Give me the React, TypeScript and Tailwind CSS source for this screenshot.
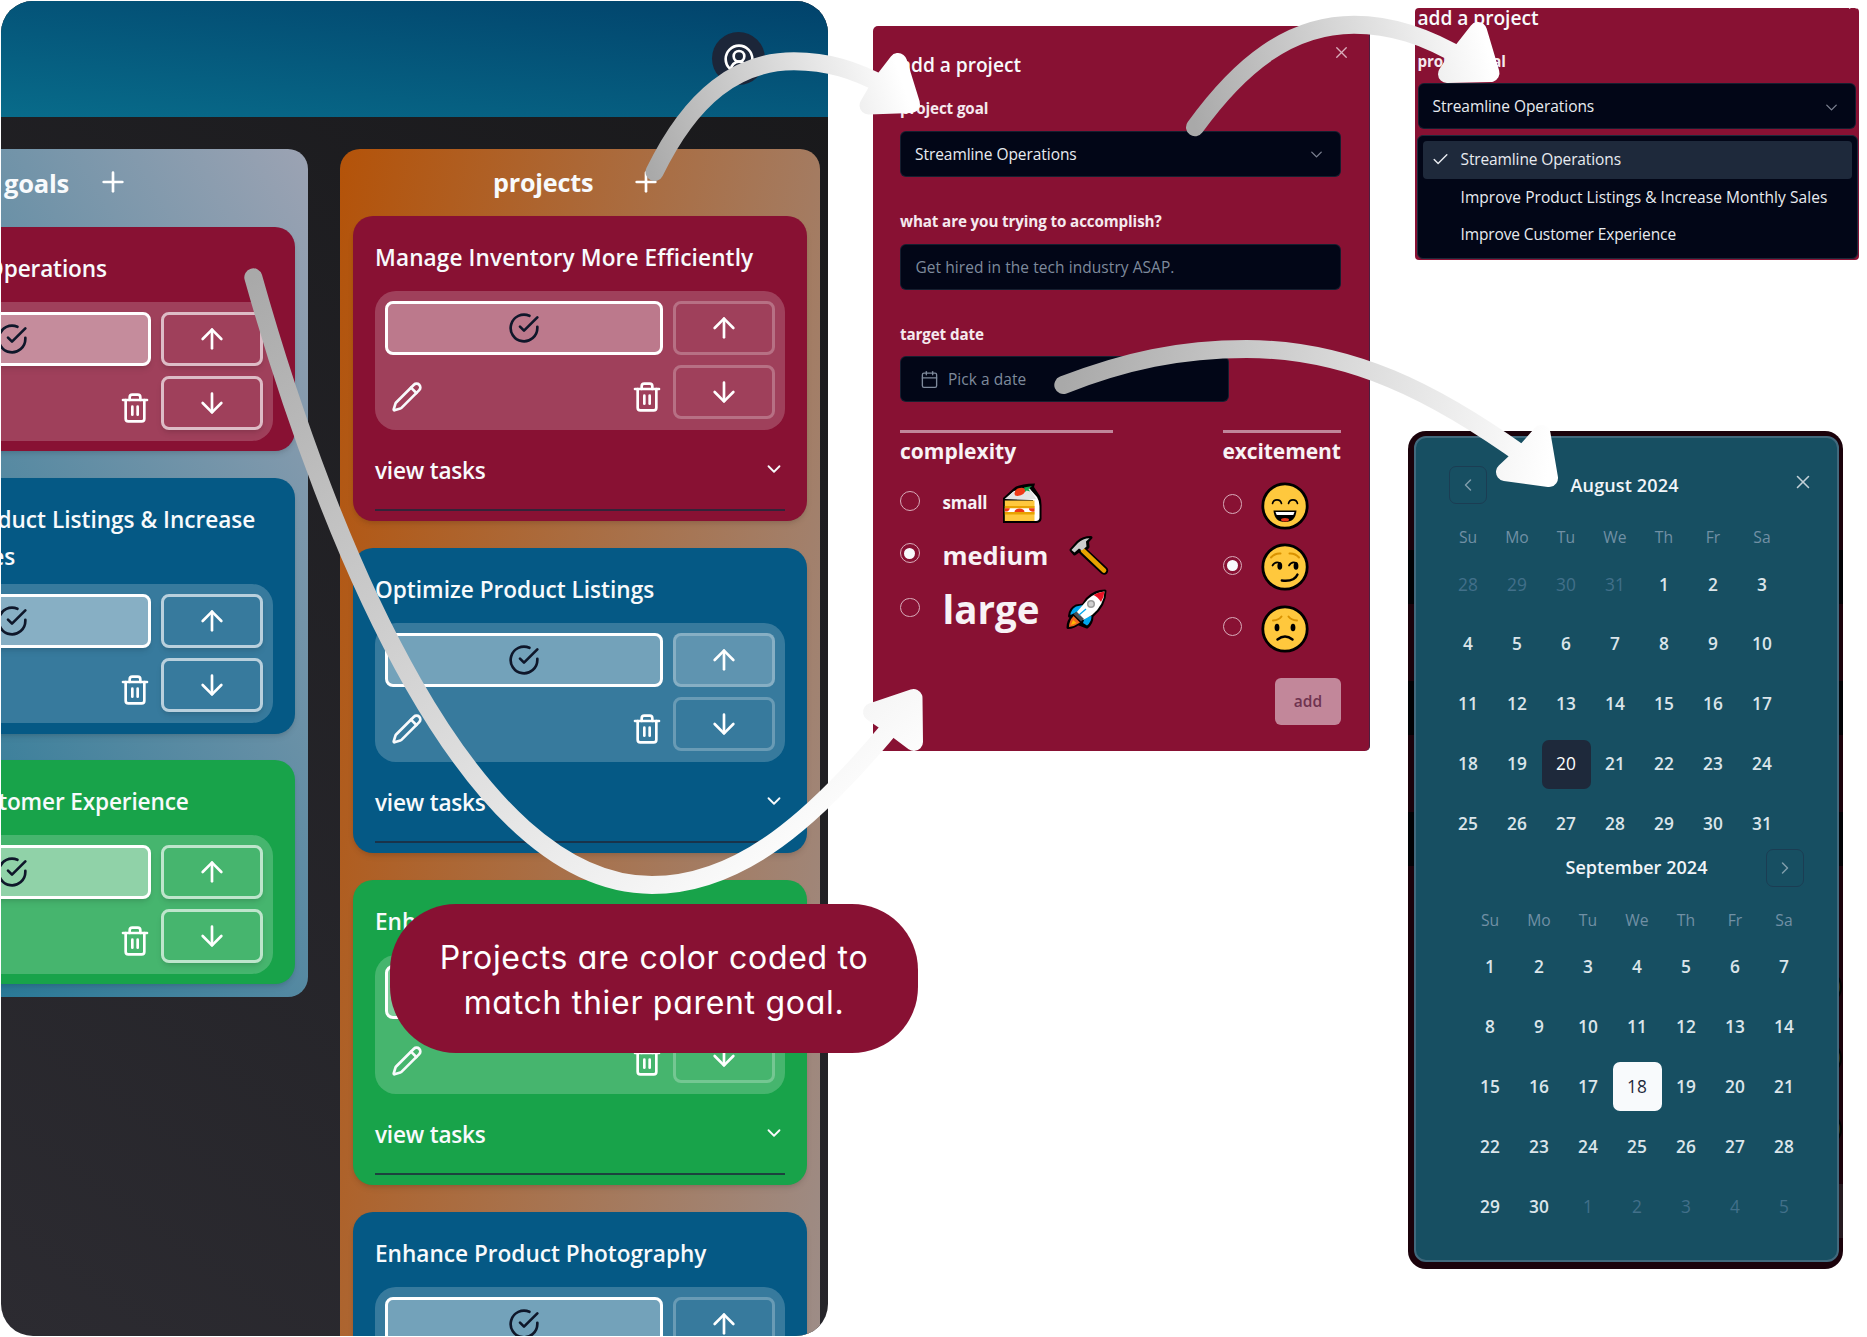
import React from "react";
import {
  ArrowDown,
  ArrowUp,
  Calendar,
  Check,
  ChevronDown,
  ChevronLeft,
  ChevronRight,
  CircleUserRound,
  Pencil,
  Plus,
  Trash2,
  X,
} from "lucide-react";

type Tone = "rose" | "sky" | "green";

const TONES: Record<Tone, string> = {
  rose: "bg-[#881133]",
  sky: "bg-[#055985]",
  green: "bg-[#18a34a]",
};

function DoneIcon() {
  return (
    <svg width="32" height="32" viewBox="0 0 24 24" fill="none" stroke="#0f172a" strokeWidth="2" strokeLinecap="round" strokeLinejoin="round">
      <path d="M22 11.08V12a10 10 0 1 1-5.93-9.14" />
      <path d="m9 11 3 3L22 4" />
    </svg>
  );
}

function Controls({ strong, lit }: { strong?: boolean; lit?: boolean }) {
  const side = strong
    ? "border-white/65 shadow-md"
    : lit
      ? "border-white/25 bg-white/20"
      : "border-white/25";
  const done = strong ? "bg-white/40 shadow-md" : "bg-white/30";
  return (
    <div className="flex h-[138.5px] w-[410px] shrink-0 gap-[10px] rounded-[21px] bg-white/20 p-[10px]">
      <div className="flex w-[278px] flex-col">
        <div className={`flex h-[54px] items-center justify-center rounded-[8px] border-[3px] border-white ${done}`}>
          <DoneIcon />
        </div>
        <div className="flex items-center justify-between pt-[26px] pl-[6px]">
          <Pencil size={32} color="#f8fafc" className={strong ? "invisible" : ""} />
          <Trash2 size={32} color="#fff" />
        </div>
      </div>
      <div className="flex w-[102px] flex-col gap-[10px]">
        <div className={`flex h-[54px] items-center justify-center rounded-[8px] border-[3px] ${side}`}>
          <ArrowUp size={32} color="#fff" />
        </div>
        <div className={`flex h-[54px] items-center justify-center rounded-[8px] border-[3px] ${strong ? side : "border-white/25"}`}>
          <ArrowDown size={32} color="#fff" />
        </div>
      </div>
    </div>
  );
}

function GoalCard({ title, tone, tall }: { title: string; tone: Tone; tall?: boolean }) {
  return (
    <div className={`w-[454px] shrink-0 rounded-[20px] px-[22px] shadow-md ${TONES[tone]} ${tall ? "h-[256px]" : "h-[224px]"}`}>
      <div className={`pt-[23px] text-[22.6px] leading-[37.3px] font-semibold text-[#f8fafc] ${tall ? "h-[106.5px]" : "h-[75px] tracking-[-0.14px]"}`}>{title}</div>
      <Controls strong />
    </div>
  );
}

function ProjectCard({ title, tone, lit, wide }: { title: string; tone: Tone; lit?: boolean; wide?: boolean }) {
  return (
    <div className={`h-[305.3px] w-[453.5px] shrink-0 rounded-[20px] px-[22px] text-[22.6px] font-semibold text-[#f8fafc] shadow-md ${TONES[tone]}`}>
      <div className={`h-[75px] pt-[23px] leading-[37.3px] whitespace-nowrap ${wide ? "tracking-[0.11px]" : ""}`}>{title}</div>
      <Controls lit={lit} />
      <div className="flex h-[81px] items-center justify-between border-b-2 border-[#1e293b]/80 pt-[3px]">
        <span className="tracking-[-0.2px]">view tasks</span>
        <ChevronDown size={22} className="-mt-1" />
      </div>
    </div>
  );
}

function Board() {
  return (
    <div className="mt-px ml-px flex h-[1335px] w-[827px] shrink-0 flex-col overflow-hidden rounded-[32px] bg-[linear-gradient(215deg,#18181a,#2c2b31)]">
      <div className="flex h-[116px] shrink-0 justify-end bg-[linear-gradient(186deg,#01426b_0px,#086b8a_200px)] pt-[31px] pr-[63px]">
        <div className="flex size-[53px] items-center justify-center rounded-full bg-[#1c2639]">
          <CircleUserRound size={32} color="#fff" />
        </div>
      </div>
      <div className="-ml-[173px] flex items-start gap-8 pt-8">
        <div className="flex h-[848px] w-[480px] shrink-0 flex-col gap-[26.7px] rounded-[20px] bg-[linear-gradient(239deg,#9ca3b3_0px,#0e6f90_870px)] px-[13px]">
          <div className="-mb-[26.7px] flex h-[78px] items-center pb-[12px] pl-[163px] text-[#f8fafc]">
            <span className="w-[67px] pt-px text-[25.5px] leading-8 font-bold tracking-[-0.2px]">goals</span>
            <Plus size={32} color="#fff" className="ml-[26px]" />
          </div>
          <GoalCard title="Streamline Operations" tone="rose" />
          <GoalCard title="Improve Product Listings & Increase Monthly Sales" tone="sky" tall />
          <GoalCard title="Improve Customer Experience" tone="green" />
        </div>
        <div className="flex h-[1400px] w-[480px] shrink-0 flex-col gap-[26.8px] rounded-[20px] bg-[linear-gradient(100deg,#b45309_0px,#94a3b8_945px)] px-[13px]">
          <div className="-mb-[26.8px] flex h-[67px] shrink-0 items-center pb-[2px] pl-[140px] text-[#f8fafc]">
            <span className="w-[100px] pt-px text-[25.2px] leading-8 font-bold tracking-[-0.2px]">projects</span>
            <Plus size={32} color="#fff" className="ml-[37px]" />
          </div>
          <ProjectCard title="Manage Inventory More Efficiently" tone="rose" wide />
          <ProjectCard title="Optimize Product Listings" tone="sky" lit />
          <ProjectCard title="Enhance Customer Support" tone="green" />
          <ProjectCard title="Enhance Product Photography" tone="sky" />
        </div>
      </div>
    </div>
  );
}

function Radio({ on }: { on?: boolean }) {
  return (
    <span className="flex size-[19.5px] shrink-0 -translate-y-0.5 items-center justify-center rounded-full border-[1.3px] border-[#d9acba]">
      {on && <span className="size-[11px] rounded-full bg-[#f8fafc]" />}
    </span>
  );
}

function Cake() {
  return (
    <svg width="40" height="41" viewBox="0 0 40 41">
      <path d="M1 15 L12 5 Q16 1 33 0.5 L32 4 L38 13 Q39.5 17 39.5 22 V36 Q39 40 34 40 H1Z" fill="#000" />
      <path d="M3 16 L12 8 L27 5 L35 14 Q37.5 18 37.5 23 V35 Q37 38 34 38 H31 V17Z" fill="#fff" />
      <path d="M3 16 L11 9 L28 6 L34 16Z" fill="#e4e4e4" />
      <path d="M2.8 17.5H32.5V38H2.8Z" fill="#ffc83d" />
      <path d="M2.8 23H32.5V25.5H2.8ZM2.8 29H32.5V31.5H2.8Z" fill="#e8a200" />
      <path d="M2.8 25.3H32.5V29H2.8Z" fill="#fff" />
      <path d="M2.8 25.3h5a4 3.4 0 0 1-5 3.2zM12.5 29a5 3.4 0 0 1 10 0zM27 25.3h5.5v3.2a4 3 0 0 1-5.5-3.2z" fill="#f03a17" />
      <path d="M12.5 10.5Q13 5.5 18 5Q22 4 23.5 7Q23 12 15.5 13Q12.5 13 12.5 10.5Z" fill="#f03a17" />
      <path d="M22 4.5L30 3L26.5 6L28 8.5L24.5 7.5L23.5 9Z" fill="#16a34a" />
    </svg>
  );
}

function Hammer() {
  return (
    <svg width="40" height="39" viewBox="0 0 40 39" strokeLinejoin="round" strokeLinecap="round">
      <path d="M14 15 L35 34.5" stroke="#000" strokeWidth="8.5" />
      <path d="M2 14 L9 6 Q14 1.5 22 1.5 L18.5 5.5 L19 11 L13 16 L10.5 14.5 L5.5 18Z" fill="#000" stroke="#000" strokeWidth="3" />
      <path d="M14 14.5 L35 34.5" stroke="#e8a200" strokeWidth="4.6" />
      <path d="M2.5 14 L9 7 Q14 2.5 20.5 2.3 L17 5.5 L17.5 10.5 L13 14.5 L10 12.5 L5.5 16.5Z" fill="#cccccc" />
    </svg>
  );
}

function Rocket() {
  return (
    <svg width="41" height="41" viewBox="0 0 41 41" strokeLinejoin="round">
      <path d="M39 2 Q29 2 21 10 L17 16 L10 17 Q4 20 3.5 27 L6 28 Q2 32 2 38.5 Q8 38 12 34.5 L21 38 Q26 34 26 27 Q39 16 39 2Z" fill="#000" stroke="#000" strokeWidth="3" />
      <path d="M17 16 L10 17.5 Q4.5 21 4.5 26 L13 22Z M25 27 L19 28 L17 34 L21 36.5 Q25.5 33 25.5 27Z" fill="#00a6ed" />
      <path d="M38.5 2.5 Q30 3 22 10 L10 24 L17 31 L26 26 Q38 16 38.5 2.5Z" fill="#fff" />
      <path d="M38.5 2.5 Q32 3 27.5 6 Q32 8 35 13 Q38 8.5 38.5 2.5Z" fill="#e81123" />
      <circle cx="25" cy="15" r="4" fill="#9b9b9b" />
      <circle cx="25" cy="15" r="2.5" fill="#cfcfcf" />
      <path d="M7.5 25 L15 32.5 L18 30 L10.5 22.5Z" fill="#4a4d52" />
      <path d="M7.5 27 Q3 32 3 38 Q8.5 37.5 14 33.5Z" fill="#f2671f" />
      <path d="M7 31 L5 36 L10.5 34Z" fill="#ffb900" />
      <path d="M13 26 L20 20" stroke="#00a6ed" strokeWidth="1.3" />
    </svg>
  );
}

function Face({ mood }: { mood: "happy" | "smirk" | "sad" }) {
  return (
    <svg width="48" height="48" viewBox="0 0 48 48" fill="none" strokeLinecap="round">
      <circle cx="24" cy="24" r="22.2" fill="#ffc83d" stroke="#000" strokeWidth="2.8" />
      {mood === "happy" && (
        <g>
          <path d="M11.5 21.5a4.6 4.6 0 0 1 9 0M27.5 21.5a4.6 4.6 0 0 1 9 0" stroke="#000" strokeWidth="1.6" />
          <path d="M12.500 28.500h23q-1 11.500-11.500 11.500t-11.500-11.500z" fill="#000" />
          <path d="M14.500 30h19l-1.200 3h-16.600z" fill="#fff" />
          <ellipse cx="24" cy="37.800" rx="4" ry="1.800" fill="#e8381a" />
        </g>
      )}
      {mood === "smirk" && (
        <g>
          <path d="M10 14.5q4-4.5 9.5-4M28.5 10.5q5.5-.5 9.5 4" stroke="#d99200" strokeWidth="2" />
          <path d="M11.5 22.5q2.5-4.5 7.5-2.5M28 22.5q2.5-4.5 7.5-2.5" stroke="#000" strokeWidth="1.7" />
          <ellipse cx="18.8" cy="23" rx="2.4" ry="3.8" fill="#000" />
          <ellipse cx="35" cy="23" rx="2.4" ry="3.8" fill="#000" />
          <path d="M20.8 37.5q12.5 1.5 15.7-6" stroke="#000" strokeWidth="2.4" />
        </g>
      )}
      {mood === "sad" && (
        <g>
          <path d="M12 15.5q6-.5 8.5-4M27.5 11.5q2.5 3.5 8.5 4" stroke="#d99200" strokeWidth="2" />
          <ellipse cx="16" cy="22.5" rx="2.4" ry="3.8" fill="#000" />
          <ellipse cx="32" cy="22.5" rx="2.4" ry="3.8" fill="#000" />
          <path d="M16.5 34.5q7.5-6 15 0" stroke="#000" strokeWidth="2.5" />
        </g>
      )}
    </svg>
  );
}

function ProjectForm() {
  const label = "h-5 text-[15.2px] leading-5 font-bold tracking-[-0.12px] text-[#f5e9ee]";
  const field = "flex h-[46px] shrink-0 items-center rounded-[6px] border border-[#1e293b]/70 bg-[#020617] text-[15.5px]";
  return (
    <div className="mt-[26px] ml-[44.5px] flex h-[725px] w-[497.5px] shrink-0 flex-col rounded-[5px] border-r border-[#4a2040] bg-[#881133] pr-[28px] pl-[27.5px]">
      <div className="mt-[29px] flex h-5 items-center justify-between text-[19.2px] font-semibold tracking-[-0.05px] text-[#f8fafc]">
        <span>add a project</span>
        <X size={19} strokeWidth={1.7} color="#d9aebc" className="-mt-[25px] -mr-[9.5px]" />
      </div>
      <div className={`mt-[23px] ${label}`}>project goal</div>
      <div className={`mt-[12.500px] justify-between pt-[2px] pr-[14px] pl-[14px] font-medium tracking-[-0.060px] text-[#e8ebf0] ${field}`}>
        <span>Streamline Operations</span>
        <ChevronDown size={19} strokeWidth={1.7} color="#7b8090" className="-mt-px" />
      </div>
      <div className={`mt-[34px] ${label}`}>what are you trying to accomplish?</div>
      <div className={`mt-[13px] pt-[2px] pl-[14.500px] tracking-[0.060px] text-[#7e8a9c] ${field}`}>Get hired in the tech industry ASAP.</div>
      <div className={`mt-[34.500px] ${label}`}>target date</div>
      <div className={`mt-3 w-[329px] gap-[9px] pt-px pl-[19px] tracking-[0.040px] text-[#7e8a9c] ${field}`}>
        <Calendar size={19} strokeWidth={1.7} />
        <span>Pick a date</span>
      </div>
      <div className="mt-[28px] flex justify-between text-[#f8f2f5]">
        <div className="w-[213px] border-t-[3px] border-[#c0869a] font-bold">
          <div className="mt-[4px] h-7 text-[21px] leading-7">complexity</div>
          <div className="mt-[12px] flex h-[52px] items-center">
            <Radio />
            <span className="ml-[23px] w-[45px] text-[17px] tracking-[-0.2px]">small</span>
            <span className="ml-[14px]"><Cake /></span>
          </div>
          <div className="flex h-[52px] items-center">
            <Radio on />
            <span className="ml-[23px] w-[107px] text-[25.500px]">medium</span>
            <span className="ml-[19px]"><Hammer /></span>
          </div>
          <div className="flex h-[57px] items-center">
            <Radio />
            <span className="ml-[23px] w-[96px] text-[38.500px] leading-none">large</span>
            <span className="ml-[27px]"><Rocket /></span>
          </div>
        </div>
        <div className="w-[118.500px] border-t-[3px] border-[#c0869a] font-bold">
          <div className="mt-[4px] h-7 text-[21px] leading-7 tracking-[-0.100px]">excitement</div>
          {(["happy", "smirk", "sad"] as const).map((m, i) => (
            <div key={m} className={`flex h-[61.300px] items-center ${i === 0 ? "mt-[10.500px]" : ""}`}>
              <Radio on={i === 1} />
              <span className="ml-[19px]"><Face mood={m} /></span>
            </div>
          ))}
        </div>
      </div>
      <div className="mt-[18.500px] flex h-[47px] w-[66px] shrink-0 items-center justify-center self-end rounded-[6px] bg-[#c2879a] pt-px text-[15.500px] font-semibold text-[#6f3350]">add</div>
    </div>
  );
}

function GoalPicker() {
  const items = [
    { name: "Streamline Operations", cls: "tracking-[-0.120px]" },
    { name: "Improve Product Listings & Increase Monthly Sales", cls: "tracking-[0.050px]" },
    { name: "Improve Customer Experience", cls: "tracking-[-0.120px]" },
  ];
  return (
    <div className="mt-[8px] ml-[6.500px] flex h-[252px] w-[444px] flex-col overflow-hidden rounded-[4px] bg-[#881133] px-[3px] text-[15.500px] text-[#e8ebf0]">
      <div className="relative h-5 text-[19.200px] leading-5 font-semibold tracking-[-0.050px] text-[#f8fafc]">
        add a project
        <X size={14} strokeWidth={2} color="#d9aebc" className="absolute -top-[10px] -right-[4px]" />
      </div>
      <div className="mt-[23px] h-5 text-[15.200px] leading-5 font-bold tracking-[-0.120px] text-[#f5e9ee]">project goal</div>
      <div className="mt-3 flex h-[46px] shrink-0 items-center justify-between rounded-[6px] border border-[#1e293b]/70 bg-[#020617] pt-[2px] pr-[14px] pl-[14px] font-medium tracking-[-0.060px]">
        <span>Streamline Operations</span>
        <ChevronDown size={19} strokeWidth={1.7} color="#7b8090" />
      </div>
      <div className="mt-[6px] -mr-[2px] -ml-px h-[124px] shrink-0 rounded-[6px] border border-[#1e293b] bg-[#020617] p-[5px] font-medium">
        {items.map((t, i) => (
          <div key={t.name} className={`flex h-[37.500px] items-center rounded-[4px] ${i === 0 ? "bg-[#1e293b]" : ""}`}>
            <span className="flex w-[38px] justify-center pr-[3px]">{i === 0 && <Check size={19} strokeWidth={1.8} />}</span>
            <span className={`whitespace-nowrap ${t.cls}`}>{t.name}</span>
          </div>
        ))}
      </div>
    </div>
  );
}

const DAYS = ["Su", "Mo", "Tu", "We", "Th", "Fr", "Sa"];

function Month({ start, length, before, picked }: { start: number; length: number; before: number; picked: { day: number; cls: string } }) {
  const cells = Array.from({ length: 35 }, (_, i) => {
    const n = i - start + 1;
    if (n < 1) return { n: before + n, out: true };
    if (n > length) return { n: n - length, out: true };
    return { n, out: false };
  });
  return (
    <div className="w-[343px]">
      <div className="grid grid-cols-7 text-center text-[15.700px] leading-6 text-[#7190a5]">
        {DAYS.map((d) => (
          <span key={d}>{d}</span>
        ))}
      </div>
      <div className="mt-[11px] grid grid-cols-7 gap-y-[10.900px] text-[17.300px]">
        {cells.map((c, i) => (
          <span
            key={i}
            className={`flex h-[49px] items-center justify-center ${
              c.out
                ? "text-[#42708a]"
                : c.n === picked.day
                  ? `rounded-[7px] ${picked.cls}`
                  : "font-semibold text-[#dbe5ea]"
            }`}
          >
            {c.n}
          </span>
        ))}
      </div>
    </div>
  );
}

function CalendarCard() {
  return (
    <div className="relative mt-[171px] h-[838px] w-[435px] overflow-hidden rounded-[18px] bg-[#1b020b] pt-[5px] pl-[6px]">
      <div className="absolute top-[119px] left-0 h-[54px] w-full bg-[#020205]" />
      <div className="absolute top-[250px] left-0 h-[54px] w-full bg-[#020205]" />
      <div className="absolute top-[381px] left-0 h-[54px] w-full bg-[#020205]" />
      <div className="absolute top-[538px] right-[1px] size-9 rounded-full border-2 border-black bg-[#33280c]" />
      <div className="absolute top-[609px] right-[1px] size-9 rounded-full border-2 border-black bg-[#33280c]" />
      <div className="absolute top-[680px] right-[1px] size-9 rounded-full border-2 border-black bg-[#33280c]" />
      <div className="absolute top-[753px] right-0 h-[54px] w-9 bg-[#261a20]" />
      <div className="relative flex h-[826px] w-[425px] flex-col rounded-[12px] border-2 border-[#41697d] bg-[#174f62]">
        <div className="mt-[28px] ml-[33px] flex h-[38px] items-center text-[#f1f5f9]">
          <div className="flex size-[38px] items-center justify-center rounded-[7px] border border-[#1b3d53]">
            <ChevronLeft size={20} strokeWidth={1.8} color="#7f9dab" />
          </div>
          <div className="ml-[83.500px] w-[113px] text-[18px] font-semibold tracking-[0.150px] whitespace-nowrap">August 2024</div>
          <X size={22} strokeWidth={1.7} color="#c3d1d8" className="-mt-[6px] ml-[108px]" />
        </div>
        <div className="mt-[21px] ml-[27.500px]">
          <Month start={4} length={31} before={31} picked={{ day: 20, cls: "bg-[#1e293b] text-white" }} />
        </div>
        <div className="ml-[54px] flex h-[38px] items-center text-[#f1f5f9]">
          <div className="ml-[95.500px] w-[146px] text-[18px] font-semibold tracking-[0.050px] whitespace-nowrap">September 2024</div>
          <div className="ml-[54px] flex size-[38px] items-center justify-center rounded-[7px] border border-[#1b3d53]">
            <ChevronRight size={20} strokeWidth={1.8} color="#7f9dab" />
          </div>
        </div>
        <div className="mt-[21px] ml-[49.500px]">
          <Month start={0} length={30} before={31} picked={{ day: 18, cls: "bg-[#f8fafc] text-[#1e293b]" }} />
        </div>
      </div>
    </div>
  );
}

function Arrows() {
  const stops = (
    <>
      <stop offset="0" stopColor="#a9a9a9" />
      <stop offset="1" stopColor="#fff" />
    </>
  );
  const arrows = [
    { id: "a1", x1: 650, y1: 172, x2: 905, y2: 90, d: "M654.5 172C692 95 738 61.3 794 61.3C828 61.3 855 70 885 86", head: "M898 62L911 104L868.5 105.5L881 84Z" },
    { id: "a2", x1: 1195, y1: 127, x2: 1490, y2: 60, d: "M1195 127.3C1240 65 1290 24.7 1354 24.7C1390 24.7 1425 35 1466 60", head: "M1478 31L1490.5 73L1447 74L1460 54Z" },
    { id: "a3", x1: 1063, y1: 385, x2: 1550, y2: 460, d: "M1063.3 385C1125 361 1180 349 1246.7 349C1350 349 1435 392 1528 459", head: "M1541.5 434L1549 478L1505 472L1522 456Z" },
    { id: "a4", x1: 253, y1: 277, x2: 800, y2: 885, d: "M253.3 277.3C330 550 470 885 652 885C740 885 815 820 900 716", head: "M913.5 698L914 742L894 727L872 712Z" },
  ];
  return (
    <svg className="pointer-events-none absolute inset-0" width="1867" height="1337" viewBox="0 0 1867 1337" fill="none">
      <defs>
        {arrows.map((a) => (
          <linearGradient key={a.id} id={a.id} gradientUnits="userSpaceOnUse" x1={a.x1} y1={a.y1} x2={a.x2} y2={a.y2}>
            {stops}
          </linearGradient>
        ))}
      </defs>
      {arrows.map((a) => (
        <g key={a.id} stroke={`url(#${a.id})`} strokeWidth="18" strokeLinecap="round" strokeLinejoin="round">
          <path d={a.d} />
          <path d={a.head} fill={`url(#${a.id})`} />
        </g>
      ))}
    </svg>
  );
}

export default function App() {
  return (
    <div className="relative flex h-[1337px] w-[1867px] items-start overflow-hidden bg-white font-['Open_Sans','Noto_Sans',sans-serif]">
      <Board />
      <ProjectForm />
      <div className="ml-[38px] flex shrink-0 flex-col">
        <GoalPicker />
        <CalendarCard />
      </div>
      <Arrows />
      <div className="absolute top-[904px] left-[390px] flex h-[149px] w-[528px] items-center justify-center rounded-[66px] bg-[#881133] pt-[4px] text-center font-['Inter',sans-serif] text-[32px] leading-[44.3px] tracking-[0.7px] text-white [font-feature-settings:'cv11']">
        <span>
          Projects are color coded to
          <br />
          match thier parent goal.
        </span>
      </div>
    </div>
  );
}
